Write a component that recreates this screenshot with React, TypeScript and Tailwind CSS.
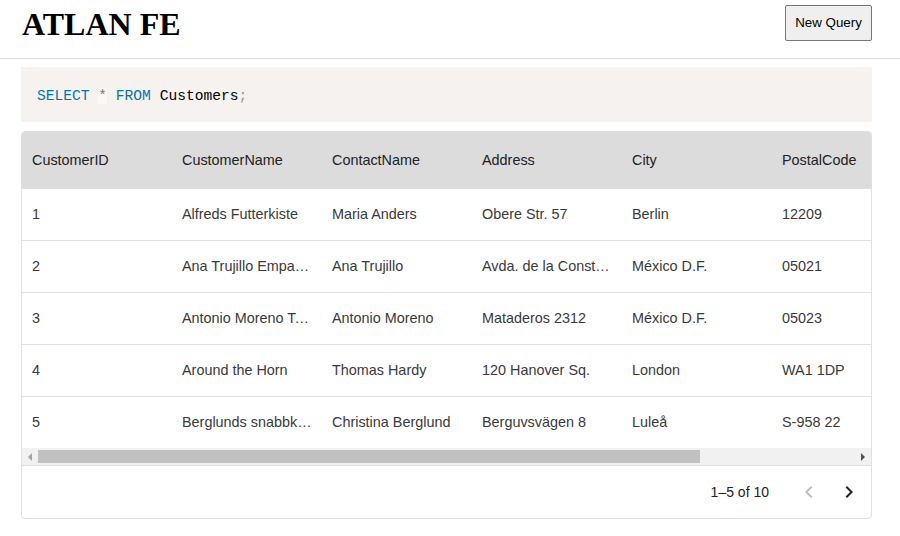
const columns = ["CustomerID", "CustomerName", "ContactName", "Address", "City", "PostalCode", "Country"];

const rows = [
  ["1", "Alfreds Futterkiste", "Maria Anders", "Obere Str. 57", "Berlin", "12209", "Germany"],
  ["2", "Ana Trujillo Emparedados y helados", "Ana Trujillo", "Avda. de la Constitución 2222", "México D.F.", "05021", "Mexico"],
  ["3", "Antonio Moreno Taquería", "Antonio Moreno", "Mataderos 2312", "México D.F.", "05023", "Mexico"],
  ["4", "Around the Horn", "Thomas Hardy", "120 Hanover Sq.", "London", "WA1 1DP", "UK"],
  ["5", "Berglunds snabbköp", "Christina Berglund", "Berguvsvägen 8", "Luleå", "S-958 22", "Sweden"],
];

const Chevron = ({ dir, className }: { dir: "left" | "right"; className: string }) => (
  <svg viewBox="0 0 24 24" className={className} fill="currentColor">
    {dir === "left" ? (
      <path d="M15.41 16.59 10.83 12l4.58-4.59L14 6l-6 6 6 6 1.41-1.41z" />
    ) : (
      <path d="M8.59 16.59 13.17 12 8.59 7.41 10 6l6 6-6 6-1.41-1.41z" />
    )}
  </svg>
);

export default function App() {
  return (
    <div className="min-h-[536px] bg-white font-['Liberation_Sans',Arial,sans-serif]">
      <header className="flex h-[59px] items-start justify-between border-b border-[#dedede] pl-[22px] pr-[28px]">
        <h1 className="mt-[6px] font-['Liberation_Serif','Times_New_Roman',serif] text-[32px] font-bold leading-[37px] text-black">
          ATLAN FE
        </h1>
        <button className="mt-[5px] h-[36px] w-[87px] rounded-[2px] border border-[#767676] bg-[#efefef] text-[13.33px] text-black">
          New Query
        </button>
      </header>

      <main className="pl-[21px] pr-[28px] pt-[8px]">
        <pre className="h-[55px] bg-[#f5f2f0] px-4 pb-[15px] pt-[17px] font-['DejaVu_Sans_Mono',monospace] text-[14.6px] leading-[22px]">
          <code>
            <span className="text-[#0077aa]">SELECT</span>{" "}
            <span className="bg-white/50 text-[#9a6e3a]">*</span>{" "}
            <span className="text-[#0077aa]">FROM</span>{" "}
            <span className="text-black">Customers</span>
            <span className="text-[#999999]">;</span>
          </code>
        </pre>

        <div className="mt-[9px] overflow-hidden rounded-[4px] border border-[#e0e0e0] text-[14.4px]">
          <div className="overflow-hidden">
            <div className="w-[1050px]">
              <div className="flex h-[56px] items-center bg-[#dcdcdc] pt-[1px] text-[#222]">
                {columns.map((c) => (
                  <div key={c} className="w-[150px] shrink-0 truncate px-[10px]">
                    {c}
                  </div>
                ))}
              </div>
              {rows.map((r) => (
                <div key={r[0]} className="flex h-[52px] items-center border-t border-[#e0e0e0] text-[#3a3a3a]">
                  {r.map((v, i) => (
                    <div key={i} className="w-[150px] shrink-0 truncate px-[10px]">
                      {v}
                    </div>
                  ))}
                </div>
              ))}
            </div>
          </div>

          <div className="flex h-[17px] items-center bg-[#f1f1f1]">
            <div className="flex h-full w-[16px] items-center justify-center">
              <div className="h-0 w-0 border-y-[4px] border-r-[4px] border-y-transparent border-r-[#a3a3a3]" />
            </div>
            <div className="flex h-full flex-1 items-center">
              <div className="h-[13px] w-[662px] bg-[#c1c1c1]" />
            </div>
            <div className="flex h-full w-[16px] items-center justify-center">
              <div className="h-0 w-0 border-y-[4px] border-l-[4px] border-y-transparent border-l-[#505050]" />
            </div>
          </div>

          <div className="flex h-[53px] items-center justify-end border-t border-[#e0e0e0] pr-[2px] text-[14px] text-[#222]">
            <span>1–5 of 10</span>
            <div className="ml-[20px] flex">
              <button className="flex h-[40px] w-[40px] items-center justify-center text-[#bdbdbd]">
                <Chevron dir="left" className="h-6 w-6" />
              </button>
              <button className="flex h-[40px] w-[40px] items-center justify-center text-[#222]">
                <Chevron dir="right" className="h-6 w-6" />
              </button>
            </div>
          </div>
        </div>
      </main>
    </div>
  );
}
